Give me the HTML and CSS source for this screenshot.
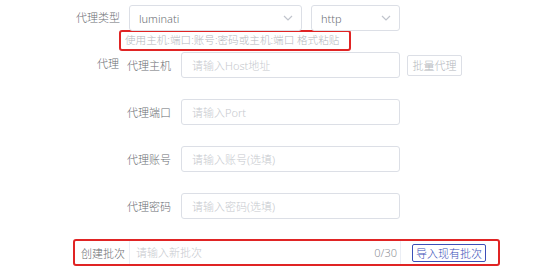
FILE: index.html
```html
<!DOCTYPE html>
<html lang="zh-CN">
<head>
    <meta charset="UTF-8">
    <meta name="viewport" content="width=device-width, initial-scale=1.0">
    <title>代理设置</title>
    <link rel="stylesheet" href="styles.css">
</head>
<body>
<main class="form">
    <div class="row">
        <label class="label">代理类型</label>
        <div class="select select_type">
            <span>luminati</span>
            <svg class="arrow" width="10" height="6" viewBox="0 0 10 6"><path d="M1 1l4 4 4-4" fill="none" stroke="#c0c4cc" stroke-width="1.2"/></svg>
        </div>
        <div class="select select_proto">
            <span>http</span>
            <svg class="arrow" width="10" height="6" viewBox="0 0 10 6"><path d="M1 1l4 4 4-4" fill="none" stroke="#c0c4cc" stroke-width="1.2"/></svg>
        </div>
    </div>
    <div class="tip">使用主机:端口:账号:密码或主机:端口 格式粘贴</div>

    <div class="row proxy">
        <label class="label proxy_label">代理</label>
        <div class="sub_rows">
            <div class="sub_row">
                <label class="sub_label">代理主机</label>
                <input class="input" type="text" placeholder="请输入Host地址">
                <button class="btn_batch">批量代理</button>
            </div>
            <div class="sub_row">
                <label class="sub_label">代理端口</label>
                <input class="input" type="text" placeholder="请输入Port">
            </div>
            <div class="sub_row">
                <label class="sub_label">代理账号</label>
                <input class="input" type="text" placeholder="请输入账号(选填)">
            </div>
            <div class="sub_row">
                <label class="sub_label">代理密码</label>
                <input class="input" type="text" placeholder="请输入密码(选填)">
            </div>
        </div>
    </div>

    <div class="batch">
        <div class="batch_prepend">创建批次</div>
        <input class="batch_input" type="text" placeholder="请输入新批次">
        <span class="count">0/30</span>
        <div class="batch_append">
            <button class="btn_import">导入现有批次</button>
        </div>
    </div>
</main>
</body>
</html>
```

FILE: styles.css
```css
:root {
    --label-color: #6b6e73;
    --text-color: #6b6e73;
    --holder-color: #c6c9ce;
    --border-color: #dcdfe6;
    --red: #e02424;
    --blue: #3b4fb8;
}

* {
    margin: 0;
    padding: 0;
    box-sizing: border-box;
    font-family: "Noto Sans", "Noto Sans CJK SC", sans-serif;
    font-weight: 300;
}

body {
    background: #ffffff;
    font-size: 11px;
    color: var(--text-color);
}

.form {
    padding-top: 5px;
}

.row {
    display: flex;
    align-items: center;
}

.label {
    width: 120px;
    text-align: right;
    color: var(--label-color);
    line-height: 26px;
}

.select {
    height: 26px;
    border: 1px solid var(--border-color);
    border-radius: 3px;
    display: flex;
    align-items: center;
    justify-content: space-between;
    padding: 0 8px 0 9px;
    color: var(--text-color);
}

.select_type {
    width: 173px;
    margin-left: 9px;
}

.select_proto {
    width: 89px;
    margin-left: 9px;
}

.tip {
    margin: -1px 0 0 119px;
    width: 232px;
    height: 21px;
    border: 2px solid var(--red);
    border-radius: 3px;
    padding-left: 4px;
    font-size: 10.6px;
    line-height: 17px;
    color: #b4b7bd;
    white-space: nowrap;
    overflow: hidden;
}

.proxy {
    margin-top: 1px;
    align-items: flex-start;
}

.proxy_label {
    width: 119px;
    line-height: 24px;
}

.sub_rows {
    display: flex;
    flex-direction: column;
    gap: 21px;
}

.sub_row {
    display: flex;
    align-items: center;
}

.sub_label {
    width: 52px;
    text-align: right;
    margin-right: 10px;
    color: var(--label-color);
}

.input {
    width: 219px;
    height: 26px;
    border: 1px solid var(--border-color);
    border-radius: 3px;
    padding: 0 10px;
    font-size: 11px;
    color: var(--text-color);
    outline: none;
}

.input::placeholder,
.batch_input::placeholder {
    color: var(--holder-color);
}

.btn_batch {
    margin-left: 7px;
    width: 55px;
    height: 21px;
    border: 1px solid var(--border-color);
    border-radius: 2px;
    background: #ffffff;
    color: #b4b7bd;
    font-size: 11px;
}

.batch {
    margin: 20px 0 0 73px;
    width: 427px;
    height: 27px;
    border: 2px solid var(--red);
    border-radius: 3px;
    display: flex;
    align-items: center;
}

.batch_prepend {
    width: 55px;
    height: 100%;
    border-right: 1px solid #ebeef5;
    display: flex;
    align-items: center;
    padding-left: 6px;
    color: var(--label-color);
}

.batch_input {
    flex: 1;
    min-width: 0;
    border: none;
    outline: none;
    padding-left: 6px;
    font-size: 11px;
    color: var(--text-color);
}

.count {
    color: #909399;
    margin-right: 3px;
}

.batch_append {
    width: 98px;
    height: 100%;
    border-left: 1px solid #ebeef5;
    display: flex;
    align-items: center;
    padding-left: 11px;
}

.btn_import {
    width: 74px;
    height: 18px;
    border: 1px solid var(--blue);
    border-radius: 2px;
    background: #ffffff;
    color: var(--blue);
    font-size: 11px;
}
```
